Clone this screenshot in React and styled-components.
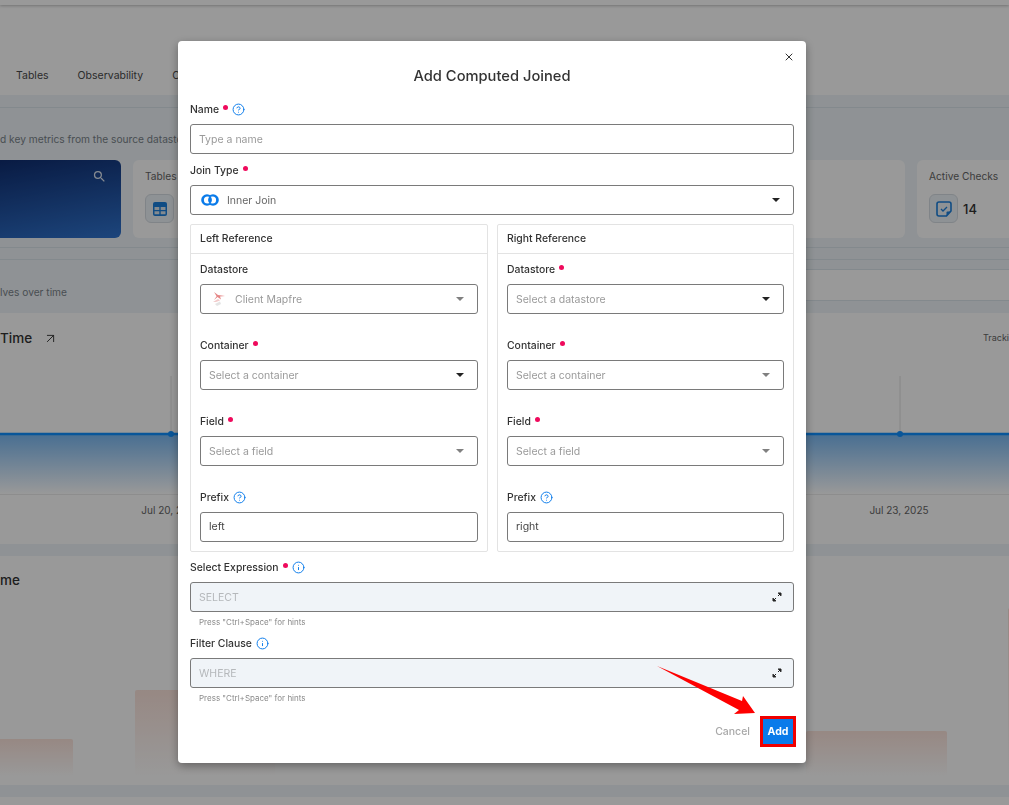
import styled, { createGlobalStyle } from "styled-components";
import { ArrowUpRight, CircleHelp, Info, X } from "lucide-react";
import { MdSearch } from "react-icons/md";

const GlobalStyle = createGlobalStyle`
  * { box-sizing: border-box; }
  html, body { margin: 0; height: 100%; overflow: hidden; }
  body { font-family: "Inter", "Noto Sans", sans-serif; background: #fff; color: #333; }
`;

const RequiredDot = () => <Dot />;

const ChevronDown = ({ muted }) => (
  <Chevron viewBox="0 0 10 5" $muted={muted}>
    <path d="M0 0h10L5 5z" fill="currentColor" />
  </Chevron>
);

const ExpandIcon = () => (
  <svg width="10" height="10" viewBox="0 0 10 10" fill="none" stroke="#222" strokeWidth="1">
    <path d="M6 4l2.500-2.500" />
    <path d="M6.200 1H9v2.800z" fill="#222" />
    <path d="M4 6L1.500 8.500" />
    <path d="M3.800 9H1V6.200z" fill="#222" />
  </svg>
);

const JoinIcon = () => (
  <svg width="18" height="12" viewBox="0 0 18 12">
    <circle cx="6" cy="6" r="5.800" fill="#0a7bea" />
    <circle cx="12" cy="6" r="5.800" fill="#0a7bea" />
    <circle cx="6.500" cy="6" r="3.600" fill="#fff" />
    <circle cx="11.500" cy="6" r="3.600" fill="#fff" />
    <path d="M9 2.300a4.500 4.500 0 0 1 0 7.400a4.500 4.500 0 0 1 0-7.400z" fill="#0a7bea" />
  </svg>
);

const MapfreLogo = () => (
  <svg width="16" height="16" viewBox="0 0 16 16" fill="none">
    <path d="M3 1l4 3 7 1-5 .6 1 3-3.500-2.600L3 9l2.600-3.800z" fill="#e58585" />
    <path d="M2 11l5-3 2 1.500-4 1.500z" fill="#f2caca" />
    <path d="M4 13l5-2.500 1 2.500-4 2z" fill="#e4e4e4" />
  </svg>
);

const TableIcon = () => (
  <svg width="14" height="14" viewBox="0 0 14 14">
    <rect width="14" height="14" rx="2" fill="#1b7fdc" />
    <path d="M1.500 5h4.800v3H1.500zM7.700 5h4.800v3H7.700zM1.500 9.200h4.800v3H1.500zM7.700 9.200h4.800v3H7.700z" fill="#dce6ee" />
  </svg>
);

const CheckNoteIcon = () => (
  <svg width="16" height="16" viewBox="0 0 16 16" fill="none" stroke="#1b7fdc" strokeWidth="1.600">
    <path d="M3 1h10a2 2 0 0 1 2 2v7l-4.500 5H3a2 2 0 0 1-2-2V3a2 2 0 0 1 2-2z" />
    <path d="M5 8l2 2 4-4" strokeWidth="1.300" />
    <path d="M15 10.500h-3.500a1 1 0 0 0-1 1V15z" fill="#1b7fdc" stroke="none" />
  </svg>
);

const SelectBox = ({ placeholder, value, muted, icon, gap }) => (
  <FieldBox $gap={gap} $hasIcon={Boolean(icon)}>
    {icon}
    {value ? <SelectValue $muted={muted}>{value}</SelectValue> : <SelectHint>{placeholder}</SelectHint>}
    <ChevronDown muted={muted} />
  </FieldBox>
);

const Label = ({ children, required, help, info }) => (
  <LabelRow>
    {children}
    {required && <RequiredDot />}
    {help && <CircleHelp size={13} color="#0a7bea" strokeWidth={1.8} />}
    {info && <Info size={13} color="#0a7bea" strokeWidth={1.8} />}
  </LabelRow>
);

const ReferencePanel = ({ title, datastore, container, field, prefix }) => (
  <Panel>
    <PanelTitle>{title}</PanelTitle>
    <PanelBody>
      <div>
        <Label required={datastore.required}>Datastore</Label>
        <SelectBox {...datastore} />
      </div>
      <div>
        <Label required>Container</Label>
        <SelectBox {...container} />
      </div>
      <div>
        <Label required>Field</Label>
        <SelectBox {...field} />
      </div>
      <div>
        <Label help>Prefix</Label>
        <TextInput defaultValue={prefix} />
      </div>
    </PanelBody>
  </Panel>
);

const ExpressionField = ({ label, required, placeholder }) => (
  <div>
    <Label required={required} info>{label}</Label>
    <ExpressionBox>
      <span>{placeholder}</span>
      <ExpandIcon />
    </ExpressionBox>
    <Hint>Press "Ctrl+Space" for hints</Hint>
  </div>
);

const Background = () => (
  <Page>
    <TopBar />
    <Tabs>
      <span>Tables</span>
      <span>Observability</span>
      <span>Checks</span>
    </Tabs>
    <Band>
      <BandLine />
      <Subtitle>d key metrics from the source datastore</Subtitle>
      <Stats>
        <HeroCard>
          <MdSearch size={15} color="#dfe7f2" />
        </HeroCard>
        <StatCard>
          <StatLabel>Tables</StatLabel>
          <StatValue>
            <IconTile><TableIcon /></IconTile>
          </StatValue>
        </StatCard>
        <StatCard>
          <StatLabel>Active Checks</StatLabel>
          <StatValue>
            <IconTile><CheckNoteIcon /></IconTile>
            14
          </StatValue>
        </StatCard>
      </Stats>
      <DoubleLine />
      <OverTimeRow>
        <OverTimeText>lves over time</OverTimeText>
        <OverTimePanel />
      </OverTimeRow>
    </Band>
    <ChartCard>
      <ChartHead>
        <ChartTitle>
          Time <ArrowUpRight size={15} strokeWidth={1.5} />
        </ChartTitle>
        <TrackingNote>Tracking</TrackingNote>
      </ChartHead>
      <svg width="1009" height="184" viewBox="0 0 1009 184">
        <defs>
          <linearGradient id="area" x1="0" y1="0" x2="0" y2="1">
            <stop offset="0" stopColor="#3f9aee" stopOpacity="0.7" />
            <stop offset="1" stopColor="#3f9aee" stopOpacity="0" />
          </linearGradient>
        </defs>
        <path d="M171 16v58M900 16v58" stroke="#e0e0e0" />
        <rect y="74" width="1009" height="60" fill="url(#area)" />
        <path d="M0 134.500h1009" stroke="#ececec" />
        <path d="M0 74h1009" stroke="#0f8fff" strokeWidth="2.500" />
        <circle cx="171" cy="74" r="3" fill="#0f8fff" />
        <circle cx="900" cy="74" r="3" fill="#0f8fff" />
        <text x="171" y="154" textAnchor="middle" fontSize="10" fill="#666">Jul 20, 2025</text>
        <text x="899" y="154" textAnchor="middle" fontSize="10" fill="#666">Jul 23, 2025</text>
      </svg>
    </ChartCard>
    <BandGap />
    <ChartCard $height={229}>
      <ChartHead $height={48} $top={16}>
        <ChartTitle>me</ChartTitle>
      </ChartHead>
      <svg width="1009" height="181" viewBox="0 0 1009 181">
        <defs>
          <linearGradient id="bar" x1="0" y1="0" x2="0" y2="1">
            <stop offset="0" stopColor="#f5a98f" stopOpacity="0.32" />
            <stop offset="1" stopColor="#f5a98f" stopOpacity="0" />
          </linearGradient>
        </defs>
        <rect x="-6" y="135" width="79" height="37" rx="2" fill="url(#bar)" />
        <rect x="135" y="86" width="140" height="86" rx="2" fill="url(#bar)" />
        <rect x="806" y="127" width="141" height="45" rx="2" fill="url(#bar)" />
        <rect x="1008" y="4" width="10" height="168" rx="2" fill="url(#bar)" />
      </svg>
    </ChartCard>
    <BandGap />
  </Page>
);

const App = () => (
  <>
    <GlobalStyle />
    <Background />
    <Overlay>
      <Modal>
        <CloseButton><X size={12} strokeWidth={2} /></CloseButton>
        <Title>Add Computed Joined</Title>
        <Label required help>Name</Label>
        <TextInput placeholder="Type a name" />
        <JoinLabel>
          <Label required>Join Type</Label>
        </JoinLabel>
        <SelectBox value="Inner Join" icon={<JoinIcon />} gap={8} />
        <Columns>
          <ReferencePanel
            title="Left Reference"
            datastore={{ value: "Client Mapfre", muted: true, icon: <MapfreLogo />, gap: 8 }}
            container={{ placeholder: "Select a container" }}
            field={{ placeholder: "Select a field", muted: true }}
            prefix="left"
          />
          <ReferencePanel
            title="Right Reference"
            datastore={{ placeholder: "Select a datastore", required: true }}
            container={{ placeholder: "Select a container", muted: true }}
            field={{ placeholder: "Select a field", muted: true }}
            prefix="right"
          />
        </Columns>
        <Expressions>
          <ExpressionField label="Select Expression" required placeholder="SELECT" />
          <ExpressionField label="Filter Clause" placeholder="WHERE" />
        </Expressions>
        <Actions>
          <CancelButton>Cancel</CancelButton>
          <AddButton>Add</AddButton>
        </Actions>
        <Pointer width="100" height="50" viewBox="0 0 100 50">
          <polygon points="0,0 85,35 86,30 98,47 77,48 82,44" fill="#fe0000" />
        </Pointer>
      </Modal>
    </Overlay>
  </>
);

export default App;

/***************************** styled components *****************************/

const Page = styled.div`
  width: 1009px;
  height: 805px;
  overflow: hidden;
  display: flex;
  flex-direction: column;
  background: #fff;
`;

const TopBar = styled.div`
  height: 5px;
  flex: none;
  background: #fff;
  box-shadow: 0 1px 3px rgba(0, 0, 0, 0.25);
`;

const Tabs = styled.div`
  height: 90px;
  flex: none;
  display: flex;
  align-items: flex-end;
  gap: 29px;
  padding: 0 0 13px 16px;
  font-size: 10.500px;
  font-weight: 400;
  color: #4a4a4a;
`;

const Band = styled.div`
  height: 218px;
  flex: none;
  display: flex;
  flex-direction: column;
  background: #eef4f8;
  padding-top: 12px;
`;

const BandLine = styled.div`
  border-top: 1px solid #dae4eb;
`;

const Subtitle = styled.div`
  height: 52px;
  padding-top: 25px;
  font-size: 10.200px;
  color: #7a838a;
  white-space: nowrap;
`;

const Stats = styled.div`
  display: grid;
  grid-template-columns: 121px 772px 200px;
  gap: 12px;
  height: 78px;
`;

const HeroCard = styled.div`
  display: flex;
  justify-content: flex-end;
  padding: 9px 14px 0 0;
  border-radius: 0 6px 6px 0;
  background: linear-gradient(170deg, #0f2d70, #3074cf);
`;

const StatCard = styled.div`
  padding: 9px 12px;
  border-radius: 6px;
  background: #fff;
`;

const StatLabel = styled.div`
  font-size: 10.200px;
  line-height: 14px;
  color: #666;
`;

const StatValue = styled.div`
  display: flex;
  align-items: center;
  gap: 5px;
  margin-top: 11px;
  font-size: 13px;
  font-weight: 500;
  color: #333;
`;

const IconTile = styled.div`
  width: 29px;
  height: 29px;
  display: flex;
  align-items: center;
  justify-content: center;
  border: 1px solid #d6dde3;
  border-radius: 6px;
  background: #edf3f8;
`;

const DoubleLine = styled.div`
  height: 13px;
  margin-top: 9px;
  border-top: 1px solid #dae4eb;
  border-bottom: 1px solid #dae4eb;
`;

const OverTimeRow = styled.div`
  flex: 1;
  display: flex;
  justify-content: space-between;
`;

const OverTimeText = styled.div`
  padding-top: 26px;
  font-size: 10.200px;
  color: #7a838a;
`;

const OverTimePanel = styled.div`
  width: 300px;
  height: 32px;
  border-top: 1px solid #dae4eb;
  border-bottom: 1px solid #dae4eb;
  margin-top: 9px;
  background: #fff;
`;

const ChartCard = styled.div`
  height: ${(props) => props.$height || 231}px;
  flex: none;
  background: #fff;
`;

const ChartHead = styled.div`
  height: ${(props) => props.$height || 47}px;
  display: flex;
  align-items: flex-start;
  justify-content: space-between;
  padding-top: ${(props) => props.$top || 17}px;
  white-space: nowrap;
  overflow: hidden;
`;

const ChartTitle = styled.div`
  display: flex;
  align-items: center;
  gap: 11px;
  font-size: 13.500px;
  font-weight: 500;
  color: #333;
`;

const TrackingNote = styled.div`
  width: 26px;
  margin-top: 2px;
  overflow: hidden;
  font-size: 9px;
  color: #666;
`;

const BandGap = styled.div`
  height: 12px;
  flex: none;
  background: #eef4f8;
`;

const Overlay = styled.div`
  position: fixed;
  inset: 0;
  background: rgba(0, 0, 0, 0.4);
`;

const Modal = styled.div`
  position: absolute;
  left: 178px;
  top: 41px;
  width: 628px;
  height: 722px;
  padding: 0 12px;
  border-radius: 4px;
  background: #fff;
  box-shadow: 0 3px 10px rgba(0, 0, 0, 0.35);
`;

const CloseButton = styled.div`
  position: absolute;
  top: 10px;
  right: 11px;
  display: flex;
  color: #333;
`;

const Title = styled.h2`
  height: 60px;
  margin: 0;
  padding-top: 26px;
  text-align: center;
  font-size: 14.700px;
  line-height: 18px;
  font-weight: 500;
  color: #333;
`;

const LabelRow = styled.div`
  display: flex;
  align-items: center;
  gap: 4px;
  height: 16px;
  font-size: 10.400px;
  font-weight: 500;
  color: #333;
`;

const Dot = styled.span`
  width: 5px;
  height: 5px;
  margin-top: -4px;
  border-radius: 50%;
  background: #ef0a5c;
`;

const FieldBox = styled.div`
  display: flex;
  align-items: center;
  gap: ${(props) => props.$gap || 0}px;
  height: 30px;
  padding: 0 8px 0 ${(props) => (props.$hasIcon ? 10 : 8)}px;
  border: 1px solid #7a7a7a;
  border-radius: 3px;
  background: #fff;
`;

const TextInput = styled.input`
  display: block;
  width: 100%;
  height: 30px;
  margin-top: 7px;
  padding: 0 8px;
  border: 1px solid #7a7a7a;
  border-radius: 3px;
  outline: none;
  font: inherit;
  font-size: 10.500px;
  color: #444;

  &::placeholder {
    color: #9a9a9a;
  }
`;

const SelectValue = styled.span`
  flex: 1;
  font-size: 10.500px;
  color: ${(props) => (props.$muted ? "#9a9a9a" : "#666")};
`;

const SelectHint = styled.span`
  flex: 1;
  font-size: 10.500px;
  color: #9a9a9a;
`;

const Chevron = styled.svg`
  width: 8px;
  height: 4px;
  margin-right: 5px;
  color: ${(props) => (props.$muted ? "#808080" : "#222")};
`;

const JoinLabel = styled.div`
  margin: 8px 0 7px;
`;

const Columns = styled.div`
  display: grid;
  grid-template-columns: 298px 297px;
  gap: 9px;
  margin-top: 9px;
`;

const Panel = styled.section`
  height: 328px;
  border: 1px solid #e3e3e3;
  border-radius: 2px;
`;

const PanelTitle = styled.div`
  height: 29px;
  padding-left: 9px;
  border-bottom: 1px solid #e3e3e3;
  font-size: 10.400px;
  font-weight: 500;
  line-height: 27px;
  color: #333;
`;

const PanelBody = styled.div`
  display: flex;
  flex-direction: column;
  gap: 23px;
  padding: 7px 9px 0;

  ${FieldBox} {
    margin-top: 7px;
  }

  ${TextInput} {
    padding-bottom: 1px;
  }
`;

const Expressions = styled.div`
  display: flex;
  flex-direction: column;
  gap: 7px;
  margin-top: 7px;
`;

const ExpressionBox = styled.div`
  display: flex;
  align-items: center;
  justify-content: space-between;
  height: 30px;
  margin-top: 7px;
  padding: 0 11px 0 8px;
  border: 1px solid #7a7a7a;
  border-radius: 3px;
  background: #f0f4f8;
  font-size: 10.500px;
  color: #b5b8bb;
`;

const Hint = styled.div`
  height: 16px;
  padding: 5px 0 0 9px;
  font-size: 8px;
  color: #8a8a8a;
`;

const Actions = styled.div`
  position: absolute;
  right: 10px;
  top: 675px;
  display: flex;
  align-items: center;
  gap: 10px;
`;

const CancelButton = styled.span`
  font-size: 10.500px;
  font-weight: 500;
  color: #a8a8a8;
`;

const AddButton = styled.button`
  width: 36px;
  height: 31px;
  padding: 0;
  border: 3px solid #f00000;
  background: #0a7bea;
  font: inherit;
  font-size: 10.500px;
  font-weight: 700;
  color: #fff;
`;

const Pointer = styled.svg`
  position: absolute;
  left: 479px;
  top: 625px;
`;
